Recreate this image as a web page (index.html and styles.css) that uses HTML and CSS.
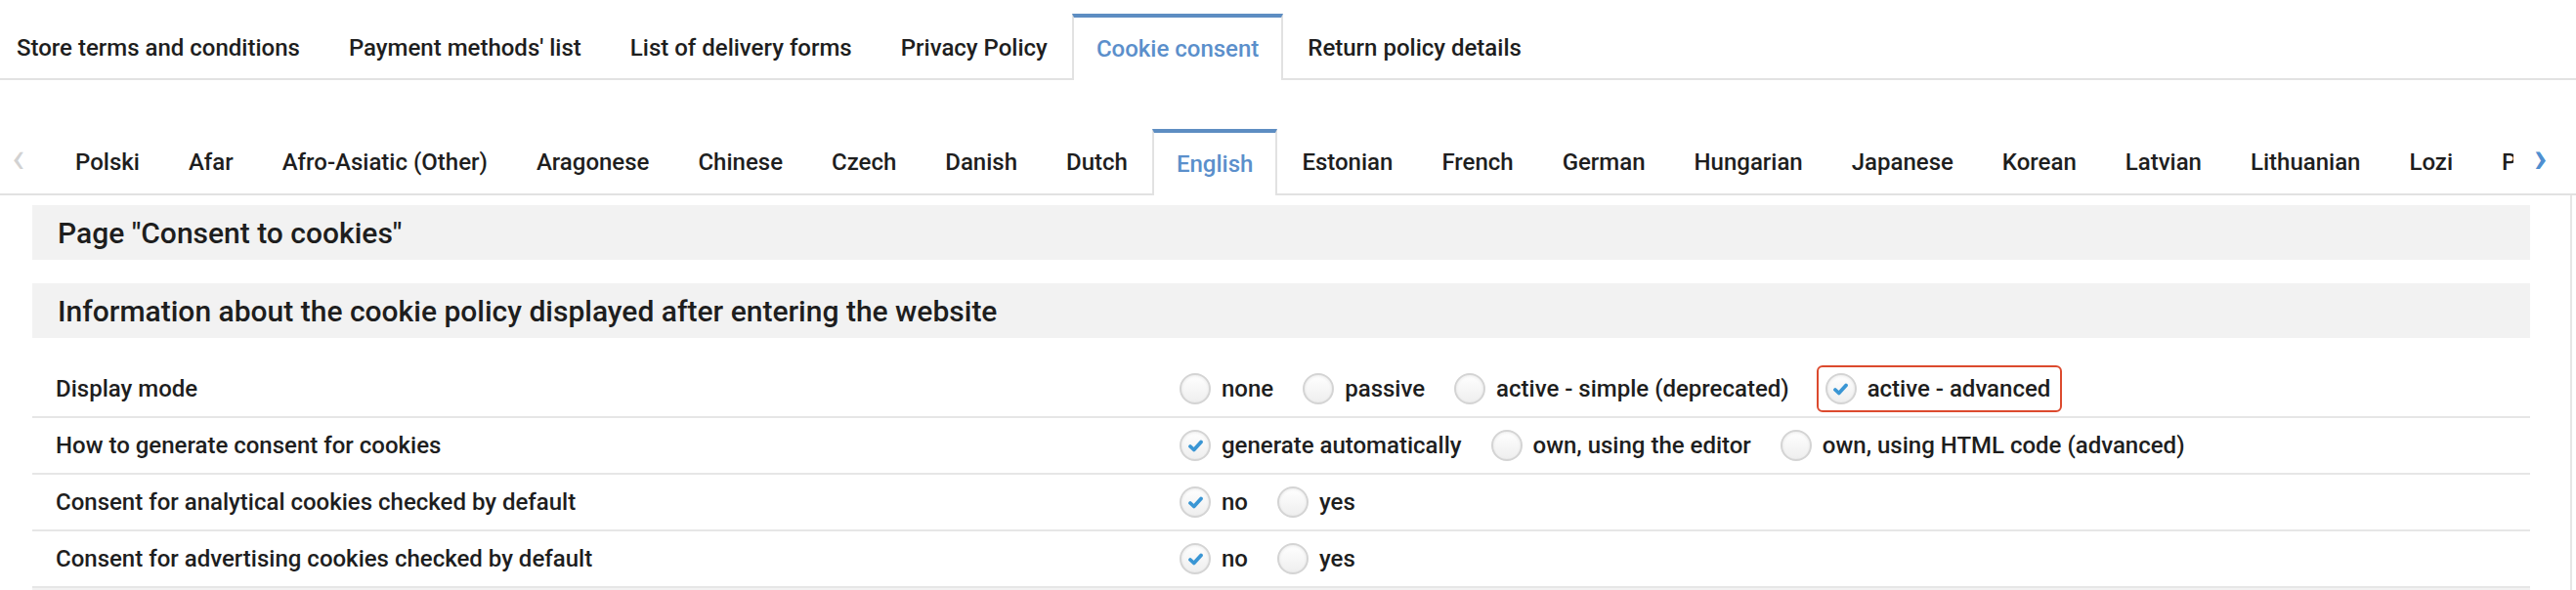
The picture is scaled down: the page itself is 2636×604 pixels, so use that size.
FILE: index.html
```html
<!DOCTYPE html>
<html lang="en">
<head>
    <meta charset="UTF-8">
    <title>Cookie consent</title>
    <link rel="stylesheet" href="styles.css">
</head>
<body>
    <div class="tabs">
        <div class="tab first">Store terms and conditions</div>
        <div class="tab">Payment methods' list</div>
        <div class="tab">List of delivery forms</div>
        <div class="tab">Privacy Policy</div>
        <div class="tab active">Cookie consent</div>
        <div class="tab">Return policy details</div>
    </div>

    <div class="lang-bar">
        <div class="arrow arrow-left">&#8249;</div>
        <div class="lang-scroll">
            <div class="lang-list">
                <div class="tab">Polski</div>
                <div class="tab">Afar</div>
                <div class="tab">Afro-Asiatic (Other)</div>
                <div class="tab">Aragonese</div>
                <div class="tab">Chinese</div>
                <div class="tab">Czech</div>
                <div class="tab">Danish</div>
                <div class="tab">Dutch</div>
                <div class="tab active">English</div>
                <div class="tab">Estonian</div>
                <div class="tab">French</div>
                <div class="tab">German</div>
                <div class="tab">Hungarian</div>
                <div class="tab">Japanese</div>
                <div class="tab">Korean</div>
                <div class="tab">Latvian</div>
                <div class="tab">Lithuanian</div>
                <div class="tab">Lozi</div>
                <div class="tab">Portuguese</div>
            </div>
        </div>
        <div class="arrow arrow-right">&#8250;</div>
    </div>

    <div class="content">
        <div class="section-head">Page "Consent to cookies"</div>
        <div class="section-head">Information about the cookie policy displayed after entering the website</div>

        <div class="row">
            <div class="label">Display mode</div>
            <div class="options">
                <label class="option"><span class="radio"></span>none</label>
                <label class="option"><span class="radio"></span>passive</label>
                <label class="option"><span class="radio"></span>active - simple (deprecated)</label>
                <label class="option marked"><span class="radio checked"><svg viewBox="0 0 12 10"><path d="M1.6 5.4 L4.6 8.2 L10.4 1.8" /></svg></span>active - advanced</label>
            </div>
        </div>
        <div class="row">
            <div class="label">How to generate consent for cookies</div>
            <div class="options">
                <label class="option"><span class="radio checked"><svg viewBox="0 0 12 10"><path d="M1.6 5.4 L4.6 8.2 L10.4 1.8" /></svg></span>generate automatically</label>
                <label class="option"><span class="radio"></span>own, using the editor</label>
                <label class="option"><span class="radio"></span>own, using HTML code (advanced)</label>
            </div>
        </div>
        <div class="row">
            <div class="label">Consent for analytical cookies checked by default</div>
            <div class="options">
                <label class="option"><span class="radio checked"><svg viewBox="0 0 12 10"><path d="M1.6 5.4 L4.6 8.2 L10.4 1.8" /></svg></span>no</label>
                <label class="option"><span class="radio"></span>yes</label>
            </div>
        </div>
        <div class="row">
            <div class="label">Consent for advertising cookies checked by default</div>
            <div class="options">
                <label class="option"><span class="radio checked"><svg viewBox="0 0 12 10"><path d="M1.6 5.4 L4.6 8.2 L10.4 1.8" /></svg></span>no</label>
                <label class="option"><span class="radio"></span>yes</label>
            </div>
        </div>
        <div class="section-head tail"></div>
    </div>
</body>
</html>
```

FILE: styles.css
```css
body {
    margin: 0;
    font-family: Roboto, 'Liberation Sans', Arial, sans-serif;
    font-weight: 500;
    font-size: 24px;
    color: #1e1e1e;
    background: #ffffff;
    overflow: hidden;
}
.tabs {
    display: flex;
    align-items: flex-end;
    height: 68px;
    padding-top: 12px;
    border-bottom: 2px solid #e2e2e2;
}
.tab {
    display: flex;
    align-items: center;
    height: 62px;
    padding: 0 23px;
    border: 2px solid transparent;
    border-top-width: 4px;
    border-bottom: none;
    white-space: nowrap;
    flex-shrink: 0;
}
.tabs .tab.first {
    padding-left: 15px;
}
.tab.active {
    color: #5b8fcb;
    background: #ffffff;
    border-color: #e2e2e2;
    border-top-color: #5d8dc2;
    margin-bottom: -2px;
    height: 64px;
}
.lang-bar {
    display: flex;
    align-items: flex-end;
    height: 68px;
    padding-top: 48px;
    border-bottom: 2px solid #e2e2e2;
}
.lang-list .tab {
    padding-bottom: 3px;
}
.lang-list .tab.active {
    height: 63px;
}
.arrow {
    height: 68px;
    display: flex;
    align-items: center;
    font-size: 44px;
    font-weight: 700;
    padding-bottom: 6px;
}
.arrow-left {
    width: 52px;
    padding-left: 12px;
    box-sizing: border-box;
    color: #d2d2d2;
    font-weight: 400;
}
.arrow-right {
    width: 64px;
    padding-left: 21px;
    box-sizing: border-box;
    color: #4f8fd0;
}
.lang-scroll {
    flex: 1;
    overflow: hidden;
    margin-bottom: -2px;
}
.lang-list {
    display: flex;
    align-items: flex-end;
    height: 70px;
}
.content {
    margin-right: 4px;
    padding: 10px 41px 0 33px;
    border-right: 2px solid #e6e6e6;
    height: 420px;
}
.section-head {
    height: 56px;
    display: flex;
    align-items: center;
    padding-left: 26px;
    margin-bottom: 24px;
    background: #f2f2f2;
    font-size: 30px;
}
.row {
    display: grid;
    grid-template-columns: 1174px 1fr;
    align-items: center;
    height: 56px;
    border-bottom: 2px solid #e6e6e6;
}
.label {
    padding-left: 24px;
}
.options {
    display: flex;
    align-items: center;
    gap: 30px;
}
.option {
    display: flex;
    align-items: center;
    gap: 11px;
    white-space: nowrap;
}
.option.marked {
    height: 44px;
    padding: 0 10px 0 7px;
    border: 2px solid #dc4a2e;
    border-radius: 6px;
    margin-left: -2px;
}
.radio {
    width: 28px;
    height: 28px;
    border: 2px solid #d4d4d4;
    border-radius: 50%;
    background: linear-gradient(#ffffff, #eeeeee);
    box-shadow: inset 0 1px 3px rgba(0, 0, 0, 0.08);
    display: flex;
    align-items: center;
    justify-content: center;
}
.radio svg {
    width: 15px;
    height: 13px;
    fill: none;
    stroke: #3a96d4;
    stroke-width: 3;
    stroke-linecap: round;
    stroke-linejoin: round;
}
```
